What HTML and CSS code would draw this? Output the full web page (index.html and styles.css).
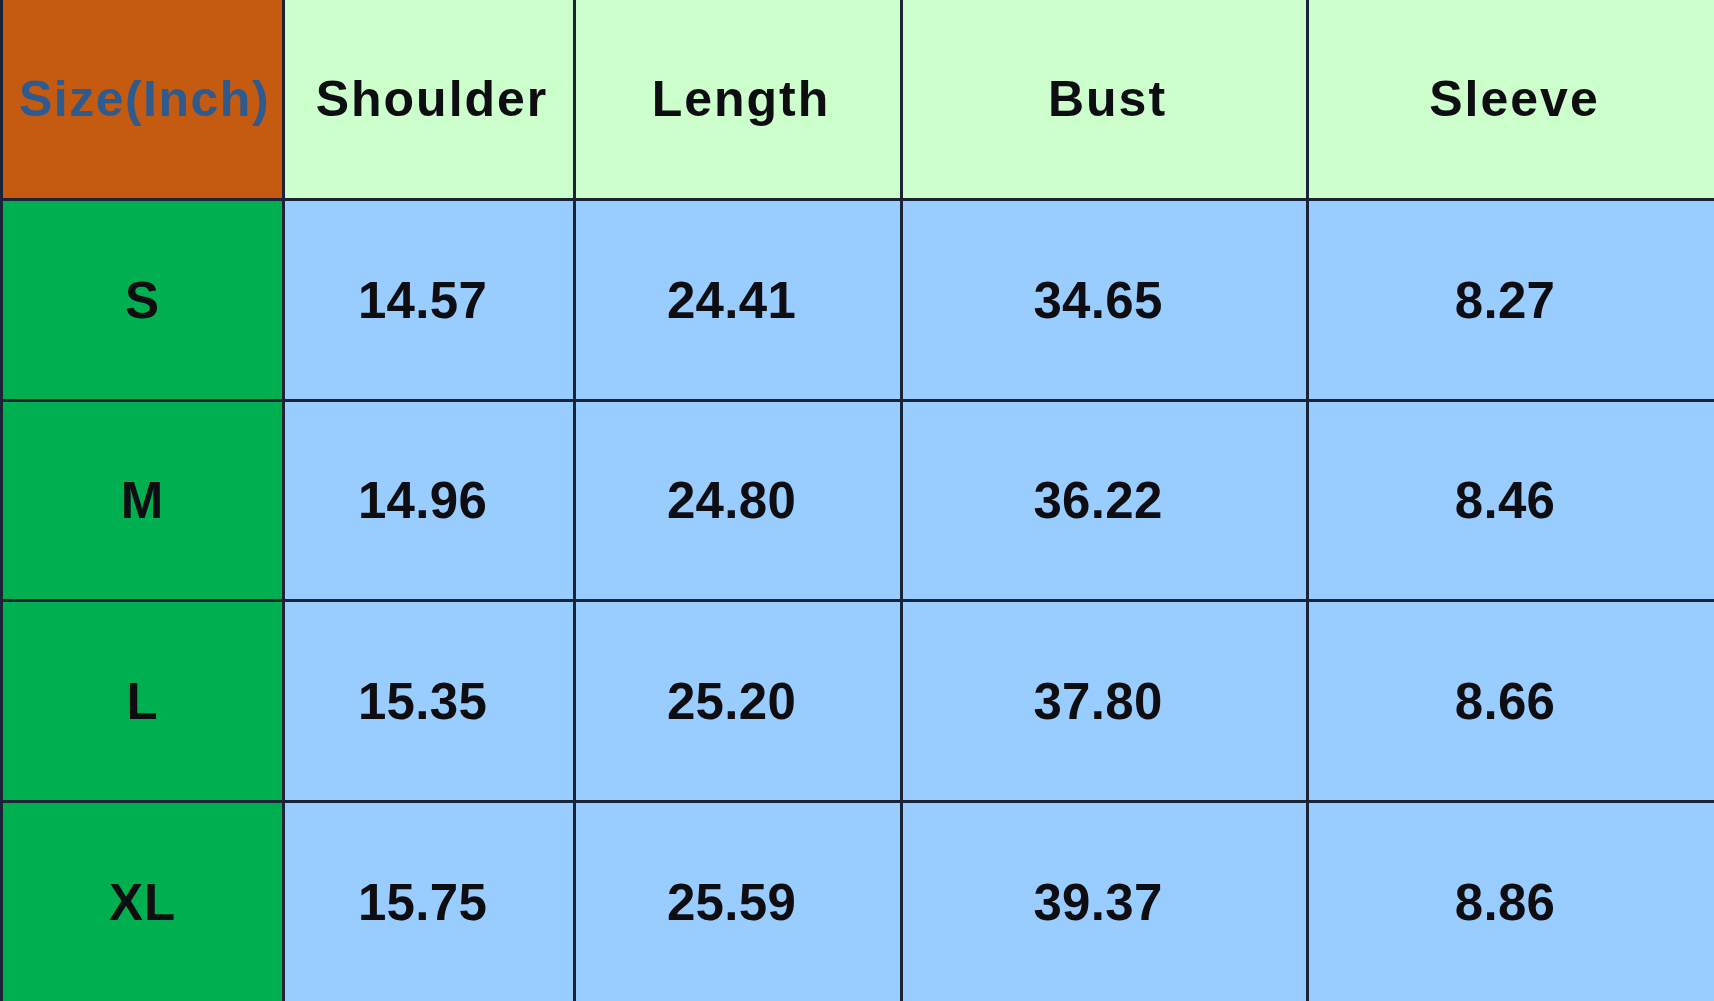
FILE: index.html
```html
<!DOCTYPE html>
<html lang="en">
<head>
<meta charset="utf-8">
<title>Size Chart</title>
<link rel="stylesheet" href="styles.css">
</head>
<body>
<div class="chart">
  <div class="cell corner">Size(Inch)</div>
  <div class="cell head">Shoulder</div>
  <div class="cell head">Length</div>
  <div class="cell head">Bust</div>
  <div class="cell head">Sleeve</div>

  <div class="cell size">S</div>
  <div class="cell val">14.57</div>
  <div class="cell val">24.41</div>
  <div class="cell val">34.65</div>
  <div class="cell val">8.27</div>

  <div class="cell size">M</div>
  <div class="cell val">14.96</div>
  <div class="cell val">24.80</div>
  <div class="cell val">36.22</div>
  <div class="cell val">8.46</div>

  <div class="cell size">L</div>
  <div class="cell val">15.35</div>
  <div class="cell val">25.20</div>
  <div class="cell val">37.80</div>
  <div class="cell val">8.66</div>

  <div class="cell size">XL</div>
  <div class="cell val">15.75</div>
  <div class="cell val">25.59</div>
  <div class="cell val">39.37</div>
  <div class="cell val">8.86</div>
</div>
</body>
</html>
```
FILE: styles.css
```css
html, body {
  margin: 0;
  padding: 0;
  width: 1714px;
  height: 1001px;
  overflow: hidden;
  background: #99ccff;
}

.chart {
  display: grid;
  grid-template-columns: 279px 288px 324px 403px 405px;
  grid-template-rows: 198px 198px 197px 198px 198px;
  gap: 3px;
  padding-left: 3px;
  width: 1714px;
  height: 1001px;
  box-sizing: border-box;
  background: #1b2436;
}

.cell {
  display: flex;
  align-items: center;
  justify-content: center;
  font-family: "Liberation Sans", Arial, sans-serif;
  font-weight: bold;
  font-size: 50px;
  letter-spacing: 2px;
  color: #0d0d12;
}

.corner {
  background: #c55a11;
  color: #2f5a8e;
  padding-left: 4px;
  letter-spacing: 1.5px;
}

.head {
  background: #ccffcc;
  padding-left: 6px;
}

.size {
  background: #00b050;
  font-size: 51px;
  letter-spacing: 1px;
}

.val {
  background: #99ccff;
  font-size: 51px;
  letter-spacing: 0.3px;
  padding-right: 13px;
}
```
